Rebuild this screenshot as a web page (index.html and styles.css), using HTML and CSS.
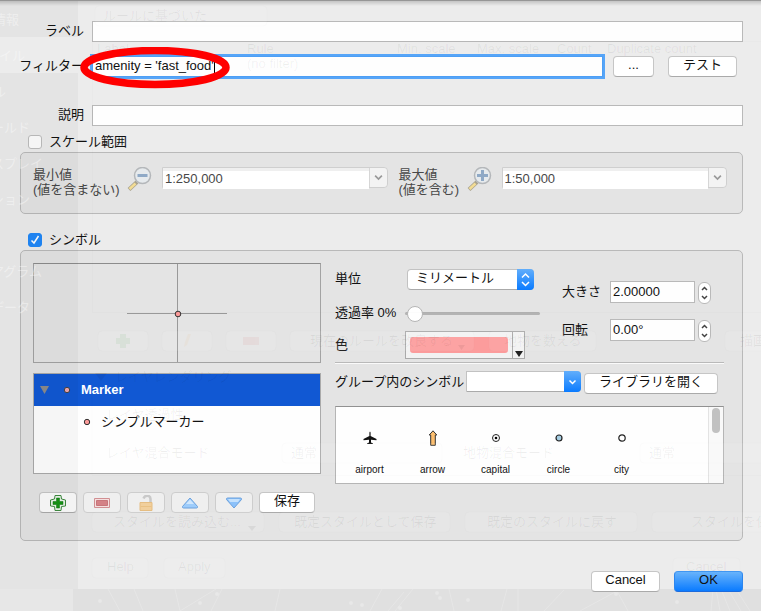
FILE: index.html
```html
<!DOCTYPE html>
<html lang="ja">
<head>
<meta charset="utf-8">
<title>ルールのプロパティ</title>
<link rel="stylesheet" href="styles.css">
</head>
<body>
<main class="sheet">
  <div class="form">
    <label for="rule-label">ラベル</label>
    <input class="field" id="rule-label" type="text">
    <label for="filter">フィルター</label>
    <div class="filter">
      <input class="field focused" id="filter" type="text" value="amenity = 'fast_food'">
      <button class="btn dots" type="button">...</button>
      <button class="btn wide" type="button">テスト</button>
      <svg class="ring" viewBox="0 0 150 42" aria-hidden="true"><ellipse cx="75" cy="20.500" rx="71" ry="17" fill="none" stroke="#f00" stroke-width="7.500"/></svg>
      <span class="caret"></span>
    </div>
    <label class="late" for="desc">説明</label>
    <input class="field late" id="desc" type="text">
  </div>

  <div class="check first"><input type="checkbox" id="scale"><label for="scale">スケール範囲</label></div>
  <section class="box scale">
    <label class="min" for="min">最小値<br>(値を含まない)</label>
    <svg class="lens" viewBox="0 0 25 25" aria-hidden="true"><path d="M2 22.500L10 15" stroke="#a9a38f" stroke-width="4"/><path d="M2.500 22L8.500 16.500" stroke="#f3dc94" stroke-width="2.500"/><circle cx="15.500" cy="8.500" r="8" fill="#e6eaed" stroke="#b4b7ba" stroke-width="1.500"/><path d="M10.500 8.500h10" stroke="#8fa9c6" stroke-width="3"/></svg>
    <div class="combo"><input id="min" type="text" value="1:250,000"><button type="button" aria-label="最小値を選択"><svg viewBox="0 0 8 6"><path d="M1 1.500l3 3 3-3"/></svg></button></div>
    <label class="max" for="max">最大値<br>(値を含む)</label>
    <svg class="lens" viewBox="0 0 25 25" aria-hidden="true"><path d="M2 22.500L10 15" stroke="#a9a38f" stroke-width="4"/><path d="M2.500 22L8.500 16.500" stroke="#f3dc94" stroke-width="2.500"/><circle cx="15.500" cy="8.500" r="8" fill="#e6eaed" stroke="#b4b7ba" stroke-width="1.500"/><path d="M10 8.500h11M15.500 3v11" stroke="#8fa9c6" stroke-width="3"/></svg>
    <div class="combo"><input id="max" type="text" value="1:50,000"><button type="button" aria-label="最大値を選択"><svg viewBox="0 0 8 6"><path d="M1 1.500l3 3 3-3"/></svg></button></div>
  </section>

  <div class="check"><input type="checkbox" id="symbol" checked><label for="symbol">シンボル</label></div>
  <section class="box symbol">
    <div class="left">
      <div class="preview"><svg viewBox="0 0 100 98" aria-hidden="true"><path d="M50.500 0V98M0 49.500H100" stroke="#999" fill="none"/><circle cx="51" cy="50" r="2.800" fill="#fb9a99" stroke="#333"/></svg></div>
      <ul class="tree">
        <li class="selected"><svg class="fold" viewBox="0 0 10 8"><path d="M0 0h9l-4.500 8z" fill="#8b8b8b"/></svg><svg class="dot" viewBox="0 0 8 8"><circle cx="4" cy="4" r="2.700" fill="#eda6ae" stroke="#444"/></svg>Marker</li>
        <li class="child"><svg class="dot" viewBox="0 0 8 8"><circle cx="4" cy="4" r="2.700" fill="#fb9a99" stroke="#333"/></svg>シンプルマーカー</li>
      </ul>
      <div class="tools">
        <button class="btn tool" type="button" aria-label="追加"><svg viewBox="0 0 16 16"><path d="M5 .5h6L11.500 4 15.500 5v6l-4 .5-.5 4H5l-.5-4-4-.5V5l4-1z" fill="#eaf5ea" stroke="#3f8b40"/><path d="M6.500 3h3v3.500H13v3H9.500V13h-3V9.500H3v-3h3.500z" fill="#159415" stroke="#0d700f" stroke-width=".5"/></svg></button>
        <button class="btn tool dim" type="button" aria-label="削除"><svg viewBox="0 0 16 16"><path d="M.5 3.500h15v9H.5z" fill="#f5dfdf" stroke="#d18f92"/><path d="M2.500 5.500h11v5h-11z" fill="#d48186" stroke="#c7757a"/></svg></button>
        <button class="btn tool dim" type="button" aria-label="ロック"><svg viewBox="0 0 16 16"><path d="M5.500 3.500C7-.5 12.500 0 12.500 4v4" fill="none" stroke="#c9c9c9" stroke-width="2.500"/><path d="M2 7.500h12v8H2z" fill="#f1cf9c" stroke="#e5bd82"/><path d="M2.500 11.500h11" stroke="#e9c184"/></svg></button>
        <button class="btn tool dim" type="button" aria-label="上へ"><svg viewBox="0 0 16 16"><path d="M8 3L15.500 11.500q.3 1.500-1 1.500h-13q-1.300 0-1-1.500z" fill="#9dccfb" stroke="#6ba0dc"/><path d="M8 4.500L4 9h8z" fill="#d0e7fd"/></svg></button>
        <button class="btn tool dim" type="button" aria-label="下へ"><svg viewBox="0 0 16 16"><path d="M8 13L.5 4.500Q.2 3 1.500 3h13q1.300 0 1 1.500z" fill="#8bc1fa" stroke="#6ba0dc"/><path d="M2 4h12l-2 3H4z" fill="#c4e1fd"/></svg></button>
        <button class="btn save" type="button">保存</button>
      </div>
    </div>
    <div class="right">
      <div class="props">
        <div class="looks">
          <label for="unit">単位</label>
          <div class="pop"><select id="unit"><option>ミリメートル</option></select><svg viewBox="0 0 16 19" aria-hidden="true"><path d="M4.500 7.500L8 4l3.500 3.500M4.500 12L8 15.500l3.500-3.500"/></svg></div>
          <label for="alpha">透過率 0%</label>
          <input class="slider" id="alpha" type="range" min="0" max="100" value="0">
          <label for="color">色</label>
          <button class="color" id="color" type="button"><span class="swatch"></span><span class="more"><svg viewBox="0 0 8 6"><path d="M0 0h8L4 6z"/></svg></span></button>
        </div>
        <div class="sizes">
          <label for="size">大きさ</label>
          <input class="field" id="size" type="text" value="2.00000">
          <button class="step" type="button" aria-label="大きさの増減"><svg viewBox="0 0 11 20"><path d="M3 7l2.500-2.500L8 7M3 13l2.500 2.500L8 13"/></svg></button>
          <label for="turn">回転</label>
          <input class="field" id="turn" type="text" value="0.00°">
          <button class="step" type="button" aria-label="回転の増減"><svg viewBox="0 0 11 20"><path d="M3 7l2.500-2.500L8 7M3 13l2.500 2.500L8 13"/></svg></button>
        </div>
      </div>
      <hr>
      <div class="library">
        <label for="group">グループ内のシンボル</label>
        <div class="pop group"><select id="group"><option></option></select><svg viewBox="0 0 16 19" aria-hidden="true"><path d="M5 8.500l3 3 3-3"/></svg></div>
        <button class="btn open" type="button">ライブラリを開く</button>
      </div>
      <div class="list">
        <ul class="symbols">
          <li><svg viewBox="0 0 16 16"><path d="M8 1.500l.6 1V6L14.500 9v1.200L9 9.700v2.800l2 1V14H5v-.5l2-1V9.700l-5.500.5V9L7.400 6V2.500z" fill="#111"/></svg>airport</li>
          <li><svg viewBox="0 0 16 16"><path d="M8 .8L11.800 5H10.300v10.300H5.700V5H4.200z" fill="#fdbf6f" stroke="#333"/></svg>arrow</li>
          <li><svg viewBox="0 0 16 16"><circle cx="8" cy="8" r="3.500" fill="#fff" stroke="#222"/><circle cx="8" cy="8" r="1.300"/></svg>capital</li>
          <li><svg viewBox="0 0 16 16"><circle cx="8" cy="8" r="3" fill="#a6cee3" stroke="#222" stroke-width="1.200"/></svg>circle</li>
          <li><svg viewBox="0 0 16 16"><circle cx="8" cy="8" r="3.200" fill="#fff" stroke="#222" stroke-width="1.200"/></svg>city</li>
        </ul>
        <div class="scroll"><span></span></div>
      </div>
    </div>
  </section>

  <footer>
    <button class="btn wide" type="button">Cancel</button>
    <button class="btn wide ok" type="button">OK</button>
  </footer>

  <svg class="behind" width="761" height="611" aria-hidden="true">
    <path class="shade" d="M0 0h78v37H0zM0 73h78v516H0z"/>
    <path class="desk" d="M73 589h688v22H73z"/>
    <path class="corner" d="M0 589h73v22H0z"/>
    <g class="plain">
      <rect x="95" y="6" width="172" height="20" rx="4"/><rect x="98" y="331" width="50" height="20" rx="4"/><rect x="162" y="331" width="50" height="20" rx="4"/><rect x="226" y="331" width="50" height="20" rx="4"/>
      <rect x="290" y="331" width="184" height="20" rx="4"/><rect x="489" y="331" width="107" height="20" rx="4"/><rect x="725" y="331" width="60" height="20" rx="4"/>
      <rect x="282" y="443" width="160" height="20" rx="4"/><rect x="640" y="443" width="130" height="20" rx="4"/>
      <rect x="92" y="512" width="172" height="20" rx="4"/><rect x="279" y="512" width="171" height="20" rx="4"/><rect x="465" y="512" width="172" height="20" rx="4"/><rect x="652" y="512" width="172" height="20" rx="4"/>
      <rect x="92" y="558" width="56" height="20" rx="4"/><rect x="164" y="558" width="61" height="20" rx="4"/><rect x="673" y="558" width="67" height="20" rx="4"/>
      <path d="M92.500 40V312M92 41.500h669M92 312.500h669M92 388V475M92 475.500h669"/>
    </g>
    <g class="dark">
      <text x="103" y="20">ルールに基づいた</text><text x="97" y="53">Label</text><text x="247" y="53">Rule</text><text x="247" y="68">(no filter)</text>
      <text x="397" y="53">Min. scale</text><text x="477" y="53">Max. scale</text><text x="557" y="53">Count</text><text x="607" y="53">Duplicate count</text>
      <text x="115" y="381">レイヤレンダリング</text><path d="M95 373h12l-6 8z"/><text x="106" y="419">レイヤ透過性</text><text x="106" y="457">レイヤ混合モード</text><text x="291" y="457">通常</text>
      <text x="463" y="457">地物混合モード</text><text x="649" y="457">通常</text><text x="310" y="345">現在のルールを改良する</text><text x="504" y="345">地物を数える</text><text x="740" y="345">描画</text>
      <text x="113" y="526">スタイルを読み込む...</text><path d="M248 526h8l-4 5zM458 345h7l-3.500 5z"/><text x="294" y="526">既定スタイルとして保存</text><text x="487" y="526">既定のスタイルに戻す</text><text x="691" y="526">スタイルを保存</text>
      <text x="107" y="571">Help</text><text x="178" y="571">Apply</text><text x="686" y="571">Cancel</text>
    </g>
    <g class="ghosticons"><path fill="#159415" d="M120 334h6v4h4v6h-4v4h-6v-4h-4v-6h4z"/><path fill="#e9a13c" d="M188 334h3l-4 11-3 2 1-5z"/><path fill="#c33" d="M243 337h16v8h-16z"/></g>
    <g class="light">
      <text x="-7" y="24">情報</text><text x="-1" y="60">イル</text><text x="-7" y="96">ル</text><text x="-9" y="132">ールド</text><text x="-9" y="168">スプレイ</text><text x="-9" y="204">ション</text><text x="-9" y="276">アグラム</text><text x="-9" y="312">データ</text>
    </g>
    <g class="net"><path d="M108 589l12 22M134 589l9 22M175 589l5 22 36-22M222 589l-11 22M280 589l-5 22M370 611l12-22M388 611l16-19M395 611l18-22M449 589l5 22M507 589l-6 22M518 589v22M564 590l-20 21M580 611l37-20 11 20M711 611l2-22M720 611l-4-22M730 611l-9-22M741 611l-13-22M750 611l-14-22"/><circle cx="100" cy="601" r="2"/><circle cx="200" cy="603" r="2"/><circle cx="217" cy="594" r="2"/><circle cx="351" cy="603" r="2"/><circle cx="362" cy="605" r="2"/><circle cx="400" cy="608" r="2"/><circle cx="437" cy="593" r="2"/><circle cx="440" cy="598" r="2"/><circle cx="468" cy="600" r="2"/><circle cx="616" cy="594" r="2"/><circle cx="677" cy="602" r="2"/></g>
  </svg>
</main>
</body>
</html>
```

FILE: styles.css
```css
* { box-sizing: border-box; }

body {
  margin: 0;
  background: #ececec;
  color: #111;
  font: 13px/16px "Liberation Sans", "Noto Sans CJK JP", sans-serif;
}

input, button, select { font: inherit; color: inherit; margin: 0; }
ul { list-style: none; margin: 0; padding: 0; }
svg { display: block; flex: none; }

.sheet {
  position: relative;
  min-height: 100vh;
  padding: 20px 18px 19px 20px;
  border-top: 1px solid #969696;
  background: linear-gradient(#c4c4c4, #ececec 5px);
  overflow: hidden;
}

.form {
  display: grid;
  grid-template-columns: 64px 1fr;
  column-gap: 8px;
  row-gap: 14px;
  align-items: center;
}
.form > label { padding-bottom: 2px; text-align: right; white-space: nowrap; justify-self: end; }
.late { margin-top: 14px; }

.field {
  width: 100%;
  min-width: 0;
  height: 21px;
  padding: 0 2px 2px;
  border: 1px solid #b9b9b9;
  border-radius: 0;
  background: #fefefe;
  outline: 0;
}
.focused { border-color: #4d9ff5; box-shadow: 0 0 0 2px #56a5f8; flex: 1; }

.filter { position: relative; display: flex; padding-right: 6px; }
.dots { width: 41px; margin: 0 14px 0 10px; }
.ring { position: absolute; left: -12px; top: -9px; width: 150px; z-index: 2; }
.caret { position: absolute; left: 122px; top: 3px; width: 1px; height: 14px; background: #000; }

.btn {
  display: flex;
  align-items: center;
  justify-content: center;
  height: 21px;
  padding: 0 0 3px;
  border: 1px solid #c6c6c6;
  border-bottom-color: #aaa;
  border-radius: 4px;
  background: #fff;
  white-space: nowrap;
}
.wide { width: 69px; }
.ok { border-color: #4096f2 #2c86ee #1d6bdc; background: linear-gradient(#68b3fb, #0a7bff); }

.check { display: flex; align-items: center; height: 16px; margin: 18px 0 2px 8px; gap: 7px; }
.check.first { margin-top: 8px; }
.check input {
  appearance: none;
  width: 14px;
  height: 14px;
  border: 1px solid #bdbdbd;
  border-radius: 3px;
  background: #fdfdfd;
}
.check input:checked {
  border-color: #2088f8;
  background: #2088f8 url("data:image/svg+xml,%3Csvg xmlns='http://www.w3.org/2000/svg' viewBox='0 0 12 12'%3E%3Cpath d='M2.500 6.500L5 9l4.500-7' fill='none' stroke='white' stroke-width='1.500'/%3E%3C/svg%3E");
}

.box { border: 1px solid #b9b9b9; border-radius: 5px; background: #e4e4e4; }

.scale { display: flex; align-items: flex-start; padding: 14px 15px 16px 12px; color: #484848; line-height: 15px; }
.min { width: 94px; white-space: nowrap; }
.max { width: 68px; margin-left: 11px; white-space: nowrap; }
.lens { width: 25px; height: 25px; margin-right: 10px; }
.combo { display: flex; flex: 1; min-width: 0; height: 21px; border: 1px solid #cfcfcf; border-radius: 0 4px 4px 0; background: #efefef; }
.combo input { flex: 1; min-width: 0; height: 18px; margin-top: 3px; padding: 0 2px 4px; border: 0; background: #fff; }
.combo button { width: 18px; padding: 0 4px; border: 0; border-left: 1px solid #d6d6d6; border-radius: 0 4px 4px 0; background: #f3f3f3; }
.combo svg { width: 9px; fill: none; stroke: #999; stroke-width: 1.500; }

.symbol { display: grid; grid-template-columns: 288fr 389fr; column-gap: 14px; padding: 12px 18px 27px 12px; }

.preview { display: flex; justify-content: center; height: 100px; border: 1px solid #a3a3a3; border-top-color: #8c8c8c; }
.preview svg { width: 100px; height: 98px; }
.tree { height: 101px; margin: 10px 0 18px; border: 1px solid #aaa; background: #fefefe; }
.tree li { display: flex; align-items: center; height: 32px; }
.dot { width: 8px; margin-right: 10px; }
.selected { padding-left: 6px; background: #1158d3; color: #fff; font-weight: bold; }
.fold { width: 10px; margin-right: 13px; }
.child { padding-left: 49px; }

.tools { display: flex; gap: 6px; padding-left: 6px; }
.tool { width: 38px; padding: 0; background: #fbfbfb; }
.tool svg { width: 16px; }
.dim { border-color: #cdcdcd; background: #efefef; }
.save { width: 56px; }

.props { display: flex; justify-content: space-between; }
.looks { display: grid; grid-template-columns: 70px 135px; grid-template-rows: 32px 36px 28px; align-items: center; white-space: nowrap; }
.sizes { display: grid; grid-template-columns: 48px 85px 16px; row-gap: 14px; align-content: start; align-items: center; padding: 17px 13px 0 0; }
.sizes .field { height: 22px; }

.pop { display: flex; position: relative; width: 127px; height: 21px; margin-left: 2px; }
.pop select { appearance: none; width: 100%; padding: 0 24px 3px 8px; border: 1px solid #c2c2c2; border-bottom-color: #aaa; border-radius: 4px; background: #fff; }
.pop svg { position: absolute; right: 0; top: 0; width: 17px; height: 21px; padding: 1px 0; border-radius: 0 4px 4px 0; background: linear-gradient(#62aefb, #0a7bff); fill: none; stroke: #fff; stroke-width: 1.500; pointer-events: none; }
.pop.group { width: 115px; margin: 0 3px 0 4px; }
.group select { border-radius: 0 4px 4px 0; }

.slider { appearance: none; width: 135px; height: 20px; background: none; }
.slider::-webkit-slider-runnable-track { height: 3px; border-radius: 2px; background: #b3b3b3; }
.slider::-webkit-slider-thumb { appearance: none; width: 16px; height: 16px; margin: -6px 0 0 2px; border: 1px solid #b5b5b5; border-radius: 50%; background: #fff; }

.color { display: flex; width: 120px; height: 28px; padding: 0; border: 1px solid #aaa; background: #f2f2f2; }
.swatch { flex: 1; height: 16px; margin: 5px 4px; border-radius: 3px; background: #fc9c9c; }
.more { display: flex; align-items: flex-end; width: 12px; height: 26px; padding: 0 2px 1px; border-left: 1px solid #aaa; }
.more svg { width: 8px; fill: #222; }

.step { width: 13px; height: 22px; margin: 2px 0 0 3px; padding: 0; border: 1px solid #b9b9b9; border-radius: 6px; background: #fff; }
.step svg { width: 11px; fill: none; stroke: #444; stroke-width: 1.500; }

hr { height: 2px; margin: 3px 0 7px; border: 0; border-top: 1px solid #b9b9b9; background: #fafafa; }
.library { display: flex; height: 23px; white-space: nowrap; }
.library label { width: 127px; line-height: 22px; }
.open { width: 134px; align-self: flex-end; }

.list { display: flex; height: 78px; margin-top: 12px; border: 1px solid #b5b5b5; border-top-color: #919191; background: #fefefe; }
.symbols { display: flex; flex: 1; padding: 23px 0 0 2px; font-size: 10px; line-height: 12px; }
.symbols li { display: flex; flex-direction: column; align-items: center; gap: 18px; width: 63px; }
.symbols svg { width: 16px; }
.scroll { width: 15px; padding: 1px 3px; border-left: 1px solid #e3e3e3; background: #f9f9f9; }
.scroll span { display: block; width: 8px; height: 25px; border-radius: 4px; background: #c1c1c1; }

footer { position: relative; z-index: 1; display: flex; justify-content: flex-end; gap: 14px; margin-top: 30px; }

.behind { position: absolute; left: 0; top: -1px; pointer-events: none; }
.shade { fill: rgba(0, 0, 0, 0.03); }
.desk { fill: rgba(0, 0, 0, 0.05); }
.corner { fill: rgba(0, 0, 0, 0.02); }
.plain { fill: rgba(255, 255, 255, 0.08); stroke: rgba(0, 0, 0, 0.012); }
.dark { fill: rgba(0, 0, 0, 0.06); }
.light { fill: rgba(255, 255, 255, 0.4); }
.ghosticons { opacity: 0.06; }
.net { fill: rgba(255, 255, 255, 0.25); }
.net path { fill: none; stroke: rgba(255, 255, 255, 0.2); }
```
